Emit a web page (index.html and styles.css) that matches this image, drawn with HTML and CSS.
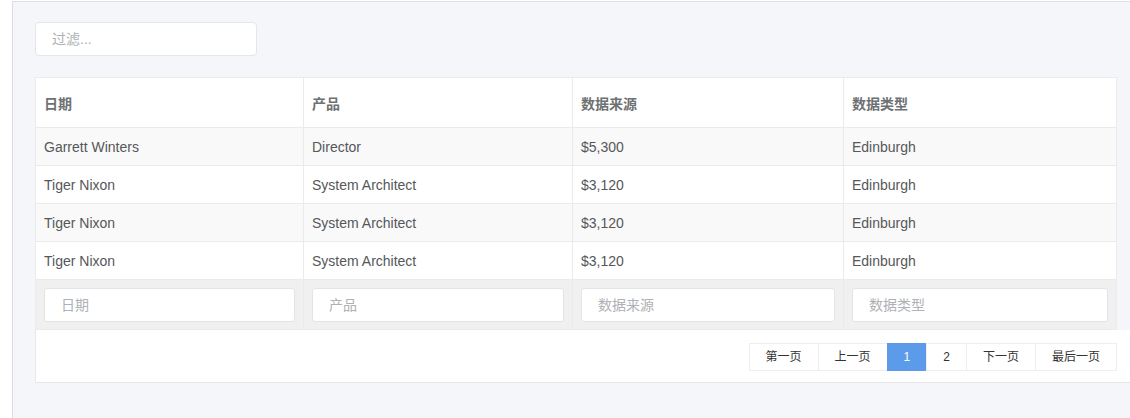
FILE: index.html
```html
<!DOCTYPE html>
<html lang="zh-CN">
<head>
  <meta charset="UTF-8">
  <title>数据列表</title>
  <link rel="stylesheet" href="styles.css">
</head>
<body>

  <div class="side"></div>

  <main class="content">
    <input class="filter" type="text" placeholder="过滤...">

    <table class="grid">
      <colgroup>
        <col class="c1">
        <col class="c2">
        <col class="c3">
        <col>
      </colgroup>
      <thead>
        <tr>
          <th>日期</th>
          <th>产品</th>
          <th>数据来源</th>
          <th>数据类型</th>
        </tr>
      </thead>
      <tbody>
        <tr>
          <td>Garrett Winters</td>
          <td>Director</td>
          <td>$5,300</td>
          <td>Edinburgh</td>
        </tr>
        <tr>
          <td>Tiger Nixon</td>
          <td>System Architect</td>
          <td>$3,120</td>
          <td>Edinburgh</td>
        </tr>
        <tr>
          <td>Tiger Nixon</td>
          <td>System Architect</td>
          <td>$3,120</td>
          <td>Edinburgh</td>
        </tr>
        <tr>
          <td>Tiger Nixon</td>
          <td>System Architect</td>
          <td>$3,120</td>
          <td>Edinburgh</td>
        </tr>
      </tbody>
      <tfoot>
        <tr>
          <th><input type="text" placeholder="日期"></th>
          <th><input type="text" placeholder="产品"></th>
          <th><input type="text" placeholder="数据来源"></th>
          <th><input type="text" placeholder="数据类型"></th>
        </tr>
      </tfoot>
    </table>

    <!-- 分页 -->
    <div class="pager-bar">
      <ul class="pager">
        <li>第一页</li>
        <li>上一页</li>
        <li class="active">1</li>
        <li>2</li>
        <li>下一页</li>
        <li>最后一页</li>
      </ul>
    </div>
  </main>

</body>
</html>
```

FILE: styles.css
```css
* {
  box-sizing: border-box;
}

html, body {
  height: 100%;
}

body {
  margin: 0;
  padding-top: 1px;
  font-family: "Liberation Sans", Arial, "Noto Sans CJK SC", sans-serif;
  font-size: 14px;
  color: #676a6c;
  background: #ffffff;
  display: flex;
  overflow: hidden;
}

.side {
  width: 12px;
  flex: none;
  background: #ffffff;
}

.content {
  flex: 1;
  min-height: 100%;
  background: #f5f6f9;
  border-left: 1px solid #dcdde0;
  border-top: 1px solid #dfe1e5;
  padding: 20px 0 0 22px;
}

.filter {
  display: block;
  width: 222px;
  height: 34px;
  padding: 6px 16px;
  border: 1px solid #e5e6e7;
  border-radius: 4px;
  background: #ffffff;
  font-family: inherit;
  font-size: 14px;
  outline: none;
}

input::placeholder {
  color: #aeb1b5;
}

.grid {
  margin-top: 21px;
  width: 1082px;
  border-collapse: collapse;
  table-layout: fixed;
  background: #ffffff;
  border: 1px solid #e7e7e7;
}

.grid .c1 { width: 268px; }
.grid .c2 { width: 269px; }
.grid .c3 { width: 271px; }

.grid th,
.grid td {
  border: 1px solid #ebebeb;
  text-align: left;
  padding: 0 8px;
}

.grid thead th {
  height: 50px;
  font-weight: bold;
  color: #6e7173;
}

.grid tbody td {
  height: 38px;
  color: #555759;
}

.grid tbody tr:nth-child(odd) {
  background: #f9f9f9;
}

.grid tfoot tr {
  background: #f0f0f0;
}

.grid tfoot th {
  height: 50px;
  padding: 0 8px;
  font-weight: normal;
}

.grid tfoot input {
  display: block;
  width: 100%;
  height: 34px;
  padding: 6px 16px;
  border: 1px solid #e3e4e5;
  border-radius: 3px;
  background: #ffffff;
  font-family: inherit;
  font-size: 14px;
  outline: none;
}

.pager-bar {
  background: #ffffff;
  border-left: 1px solid #e7e7e7;
  border-bottom: 1px solid #e7e7e7;
  height: 53px;
  display: flex;
  justify-content: flex-end;
  padding: 13px 13px 0 0;
}

.pager {
  list-style: none;
  margin: 0;
  padding: 0;
  display: flex;
  height: 28px;
}

.pager li {
  padding: 0 16px;
  line-height: 26px;
  font-size: 12px;
  color: #333333;
  border: 1px solid #eeeeee;
  margin-left: -1px;
  background: #ffffff;
}

.pager li.active {
  background: #5b9bea;
  border-color: #5b9bea;
  color: #ffffff;
}
```
